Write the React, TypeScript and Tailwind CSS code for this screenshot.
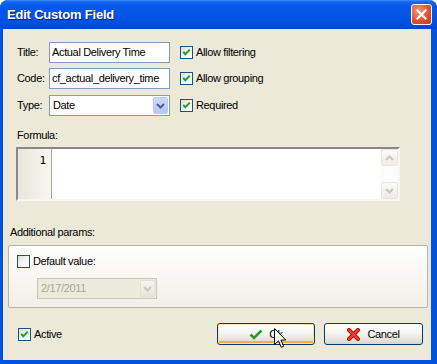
import React from "react";

function Check({ checked }: { checked: boolean }) {
  return (
    <span className="w-[13px] h-[13px] border border-[#1C5180] bg-gradient-to-br from-[#DCDCD7] via-[#F4F4F1] to-white flex items-center justify-center shrink-0">
      {checked && (
        <svg width="9" height="9" viewBox="0 0 9 9">
          <path d="M1.2 3.8 L3.3 6.2 L7.8 1.6" stroke="#21A121" strokeWidth="2" fill="none" />
        </svg>
      )}
    </span>
  );
}

function Chevron({ color }: { color: string }) {
  return (
    <svg width="9" height="6" viewBox="0 0 9 6">
      <path d="M1 1 L4.5 4.5 L8 1" stroke={color} strokeWidth="2" fill="none" />
    </svg>
  );
}

function ScrollBtn({ up }: { up: boolean }) {
  return (
    <div className="w-[17px] h-[17px] rounded-[2px] border border-[#E6E5DE] bg-gradient-to-b from-[#FAFAF8] to-[#EEEDE7] flex items-center justify-center">
      <svg width="9" height="6" viewBox="0 0 9 6">
        <path d={up ? "M1 5 L4.5 1.5 L8 5" : "M1 1 L4.5 4.5 L8 1"} stroke="#C9C8BF" strokeWidth="2" fill="none" />
      </svg>
    </div>
  );
}

export default function App() {
  return (
    <div className="w-[437px] h-[364px] bg-white font-['Liberation_Sans',Arial,sans-serif] text-[11px] tracking-[-0.35px] text-black leading-[13px]">
      <div className="w-[437px] h-[364px] rounded-t-[8px] overflow-hidden bg-[#0452E2] flex flex-col">
        {/* title bar */}
        <div className="h-[29px] shrink-0 flex items-center bg-[linear-gradient(to_bottom,#3D8FF9_0px,#1466F0_2px,#0558EA_6px,#0054E6_18px,#004BDB_26px,#0044D0_29px)]">
          <span className="ml-[7px] text-white font-bold text-[13px] leading-[16px] tracking-[-0.2px] [text-shadow:1px_1px_0_#0A1F80]">
            Edit Custom Field
          </span>
          <div className="ml-auto mr-[5px] w-[21px] h-[21px] rounded-[3px] border border-white bg-[radial-gradient(circle_at_35%_30%,#F09A80,#E2512F_55%,#C93A1C)] flex items-center justify-center">
            <svg width="11" height="11" viewBox="0 0 11 11">
              <path d="M1.5 1.5 L9.5 9.5 M9.5 1.5 L1.5 9.5" stroke="white" strokeWidth="2.2" strokeLinecap="square" />
            </svg>
          </div>
        </div>
        {/* body */}
        <div className="flex-1 ml-[3px] mr-[6px] mb-[4px] bg-[#ECE9D8] flex flex-col">
          {/* rows */}
          <div className="mt-[13px] ml-[14px] flex flex-col">
            <div className="h-[21px] flex items-center">
              <span className="w-[32px]">Title:</span>
              <div className="w-[121px] h-[21px] border border-[#7F9DB9] bg-white flex items-center pl-[2px]">Actual Delivery Time</div>
              <div className="ml-[10px] flex items-center gap-[3px]"><Check checked /><span>Allow filtering</span></div>
            </div>
            <div className="mt-[5px] h-[21px] flex items-center">
              <span className="w-[32px]">Code:</span>
              <div className="w-[121px] h-[21px] border border-[#7F9DB9] bg-white flex items-center pl-[2px] overflow-hidden whitespace-nowrap">cf_actual_delivery_time</div>
              <div className="ml-[10px] flex items-center gap-[3px]"><Check checked /><span>Allow grouping</span></div>
            </div>
            <div className="mt-[6px] h-[21px] flex items-center">
              <span className="w-[32px]">Type:</span>
              <div className="w-[121px] h-[21px] border border-[#7F9DB9] bg-white flex items-center pl-[3px] pr-[1px]">
                <span className="flex-1">Date</span>
                <span className="w-[15px] h-[17px] rounded-[2px] border border-[#BACCF6] bg-gradient-to-b from-[#CAD8FA] to-[#B4C8F6] flex items-center justify-center">
                  <Chevron color="#4D6185" />
                </span>
              </div>
              <div className="ml-[10px] flex items-center gap-[3px]"><Check checked /><span>Required</span></div>
            </div>
          </div>
          {/* formula */}
          <span className="mt-[13px] ml-[14px]">Formula:</span>
          <div className="mt-[5px] ml-[13px] w-[384px] h-[54px] border-2 border-t-[#898989] border-l-[#898989] border-r-[#F7F6F1] border-b-[#F7F6F1] bg-white flex">
            <div className="w-[34px] h-full bg-gradient-to-r from-[#E9E7DA] to-[#F8F7F2] border-r border-[#A8A69B] flex justify-end pr-[5px] pt-[5px] font-['DejaVu_Sans_Mono',monospace] tracking-normal text-[11px] leading-[13px]">1</div>
            <div className="flex-1" />
            <div className="w-[17px] h-full flex flex-col justify-between bg-[#FCFCFA]">
              <ScrollBtn up />
              <ScrollBtn up={false} />
            </div>
          </div>
          {/* additional params */}
          <span className="mt-[25px] ml-[7px]">Additional params:</span>
          <div className="mt-[6px] ml-[5px] w-[420px] h-[63px] border border-[#B8B6AA] rounded-[2px] bg-gradient-to-b from-white to-[#F1EFE6] flex flex-col">
            <div className="mt-[9px] ml-[8px] flex items-center gap-[3px]"><Check checked={false} /><span>Default value:</span></div>
            <div className="mt-[10px] ml-[28px] w-[120px] h-[21px] border border-[#C9C7BA] bg-[#EBEADB] flex items-center pl-[3px] pr-[1px] text-[#ACA899]">
              <span className="flex-1">2/17/2011</span>
              <span className="w-[15px] h-[17px] rounded-[2px] border border-[#E2E0D4] bg-gradient-to-b from-[#F5F4EE] to-[#E8E6DA] flex items-center justify-center">
                <Chevron color="#C9C7BA" />
              </span>
            </div>
          </div>
          {/* bottom */}
          <div className="mt-[15px] flex items-center">
            <div className="ml-[15px] flex items-center gap-[3px]"><Check checked /><span>Active</span></div>
            <div className="ml-auto mr-[8px] flex gap-[9px]">
              <div className="relative">
                <button className="w-[98px] h-[22px] rounded-[3px] border border-[#003C74] bg-gradient-to-b from-white via-[#F3F3EF] to-[#DAD6CB] shadow-[inset_0_0_0_1px_#FFE3A8,inset_0_-2px_0_1px_#F3B13B] flex items-center justify-center gap-[6px]">
                  <svg width="14" height="11" viewBox="0 0 14 11">
                    <path d="M1.5 5.5 L5 9 L12.5 1.5" stroke="#24A024" strokeWidth="2.6" fill="none" />
                  </svg>
                  <span>Ok</span>
                </button>
                <svg className="absolute left-[57px] top-[5px]" width="13" height="21" viewBox="0 0 13 21">
                  <path d="M0.5 0.5 L0.5 16.5 L4.5 12.8 L7.2 19.3 L9.6 18.3 L6.9 12 L11.8 12 Z" fill="white" stroke="black" strokeWidth="1" />
                </svg>
              </div>
              <button className="w-[99px] h-[22px] rounded-[3px] border border-[#003C74] bg-gradient-to-b from-white via-[#F3F3EF] to-[#DAD6CB] flex items-center justify-center gap-[7px]">
                <svg width="13" height="13" viewBox="0 0 13 13">
                  <path d="M2 2 L11 11 M11 2 L2 11" stroke="#A01010" strokeWidth="4" strokeLinecap="round" />
                  <path d="M2 2 L11 11 M11 2 L2 11" stroke="#F03C2A" strokeWidth="2.4" strokeLinecap="round" />
                </svg>
                <span>Cancel</span>
              </button>
            </div>
          </div>
        </div>
      </div>
    </div>
  );
}
